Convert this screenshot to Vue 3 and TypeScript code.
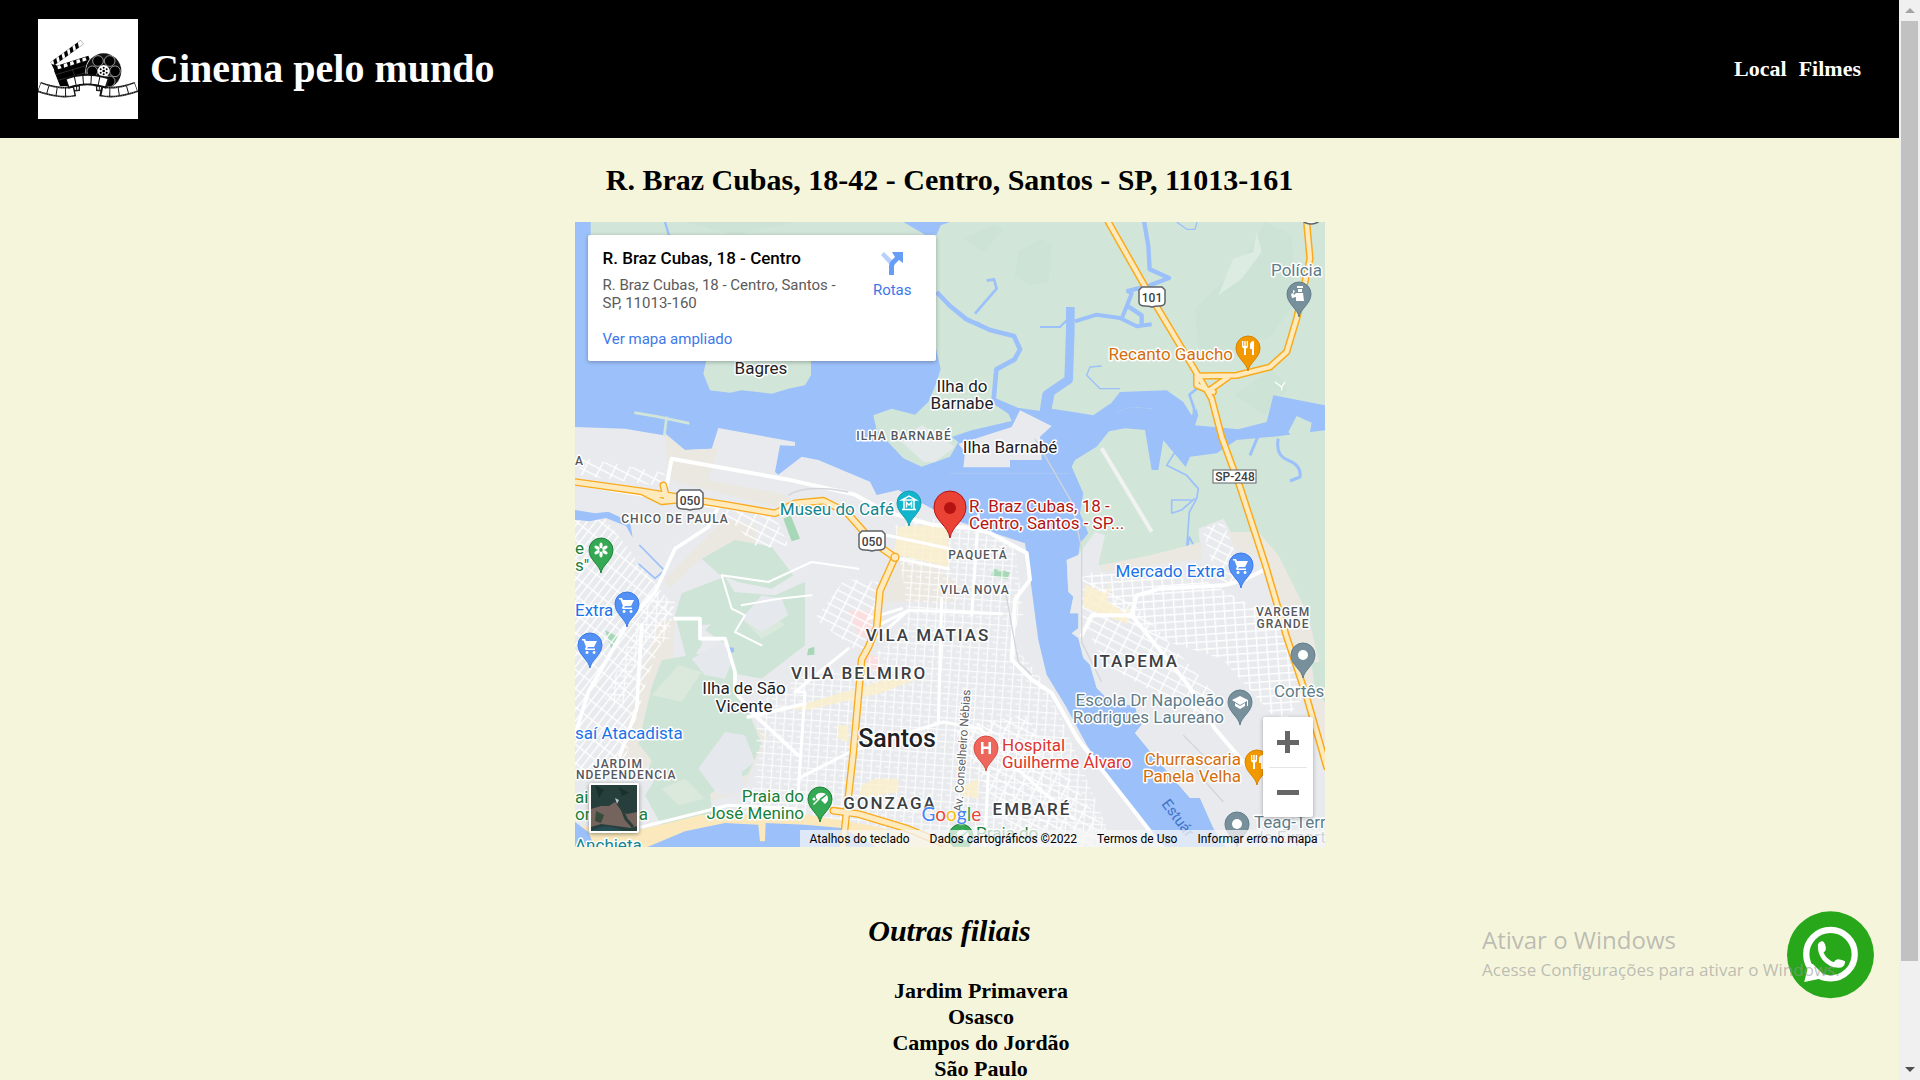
<script setup lang="ts">
type Tone = 'place' | 'food' | 'shop' | 'park' | 'school' | 'museum' | 'health' | 'target' | 'estuary'
type Anchor = 'start' | 'middle' | 'end'

interface Label {
  x: number
  y: number
  text: string
  kind: string
  anchor?: Anchor
  rotate?: number
}

interface Pin {
  x: number
  y: number
  tone: Tone
  icon: string
}

const branches: string[] = ['Jardim Primavera', 'Osasco', 'Campos do Jordão', 'São Paulo']

const labels: Label[] = [
  { x: 186, y: 152, text: 'Bagres', kind: 'place', anchor: 'middle' },
  { x: 387, y: 170, text: 'Ilha do', kind: 'place', anchor: 'middle' },
  { x: 387, y: 187, text: 'Barnabe', kind: 'place', anchor: 'middle' },
  { x: 435, y: 231, text: 'Ilha Barnabé', kind: 'place', anchor: 'middle' },
  { x: 169, y: 472, text: 'Ilha de São', kind: 'place', anchor: 'middle' },
  { x: 169, y: 490, text: 'Vicente', kind: 'place', anchor: 'middle' },
  { x: 322, y: 525, text: 'Santos', kind: 'city', anchor: 'middle' },
  { x: 329, y: 218, text: 'ILHA BARNABÉ', kind: 'area', anchor: 'middle' },
  { x: 100, y: 301, text: 'CHICO DE PAULA', kind: 'area', anchor: 'middle' },
  { x: 403, y: 337, text: 'PAQUETÁ', kind: 'area', anchor: 'middle' },
  { x: 400, y: 372, text: 'VILA NOVA', kind: 'area', anchor: 'middle' },
  { x: 708, y: 394, text: 'VARGEM', kind: 'area', anchor: 'middle' },
  { x: 708, y: 406, text: 'GRANDE', kind: 'area', anchor: 'middle' },
  { x: 43, y: 546, text: 'JARDIM', kind: 'area', anchor: 'middle' },
  { x: 1, y: 557, text: 'NDEPENDENCIA', kind: 'area' },
  { x: 0, y: 243, text: 'A', kind: 'area' },
  { x: 353, y: 419, text: 'VILA MATIAS', kind: 'district', anchor: 'middle' },
  { x: 284, y: 457, text: 'VILA BELMIRO', kind: 'district', anchor: 'middle' },
  { x: 561, y: 445, text: 'ITAPEMA', kind: 'district', anchor: 'middle' },
  { x: 315, y: 587, text: 'GONZAGA', kind: 'district', anchor: 'middle' },
  { x: 457, y: 593, text: 'EMBARÉ', kind: 'district', anchor: 'middle' },
  { x: 387, y: 590, text: 'Av. Conselheiro Nébias', kind: 'street', rotate: -86 },
  { x: 586, y: 582, text: 'Estuár', kind: 'estuary', rotate: 53 },
  { x: 658, y: 138, text: 'Recanto Gaucho', kind: 'food', anchor: 'end' },
  { x: 747, y: 54, text: 'Polícia', kind: 'school', anchor: 'end' },
  { x: 319, y: 293, text: 'Museu do Café', kind: 'museum', anchor: 'end' },
  { x: 394, y: 290, text: 'R. Braz Cubas, 18 -', kind: 'target' },
  { x: 394, y: 307, text: 'Centro, Santos - SP...', kind: 'target' },
  { x: 650, y: 355, text: 'Mercado Extra', kind: 'shop', anchor: 'end' },
  { x: 0, y: 394, text: 'Extra', kind: 'shop' },
  { x: 0, y: 517, text: 'saí Atacadista', kind: 'shop' },
  { x: 0, y: 332, text: 'e', kind: 'park' },
  { x: 0, y: 349, text: 's"', kind: 'park' },
  { x: 229, y: 580, text: 'Praia do', kind: 'park', anchor: 'end' },
  { x: 229, y: 597, text: 'José Menino', kind: 'park', anchor: 'end' },
  { x: 401, y: 617, text: 'Praia do', kind: 'park' },
  { x: 0, y: 581, text: 'ai', kind: 'park' },
  { x: 0, y: 598, text: 'on', kind: 'park' },
  { x: 73, y: 598, text: 'a', kind: 'park', anchor: 'end' },
  { x: 0, y: 629, text: 'Anchieta', kind: 'museum' },
  { x: 649, y: 484, text: 'Escola Dr Napoleão', kind: 'school', anchor: 'end' },
  { x: 649, y: 501, text: 'Rodrigues Laureano', kind: 'school', anchor: 'end' },
  { x: 699, y: 475, text: 'Cortês', kind: 'school' },
  { x: 679, y: 606, text: 'Teag-Terr', kind: 'school' },
  { x: 679, y: 621, text: 'de Export', kind: 'school' },
  { x: 427, y: 529, text: 'Hospital', kind: 'health' },
  { x: 427, y: 546, text: 'Guilherme Álvaro', kind: 'health' },
  { x: 666, y: 543, text: 'Churrascaria', kind: 'food', anchor: 'end' },
  { x: 666, y: 560, text: 'Panela Velha', kind: 'food', anchor: 'end' },
]

const pins: Pin[] = [
  { x: 724, y: 72, tone: 'school', icon: 'police' },
  { x: 673, y: 126, tone: 'food', icon: 'fork' },
  { x: 334, y: 281, tone: 'museum', icon: 'museum' },
  { x: 26, y: 328, tone: 'park', icon: 'flower' },
  { x: 52, y: 382, tone: 'shop', icon: 'cart' },
  { x: 15, y: 423, tone: 'shop', icon: 'cart' },
  { x: 666, y: 343, tone: 'shop', icon: 'cart' },
  { x: 728, y: 433, tone: 'school', icon: 'dot' },
  { x: 665, y: 480, tone: 'school', icon: 'cap' },
  { x: 411, y: 526, tone: 'health', icon: 'hospital' },
  { x: 682, y: 540, tone: 'food', icon: 'fork' },
  { x: 245, y: 577, tone: 'park', icon: 'beach' },
  { x: 662, y: 602, tone: 'school', icon: 'dot' },
  { x: 386, y: 614, tone: 'park', icon: 'beach' },
]

const shields = [
  { x: 577, y: 75, text: '101' },
  { x: 115, y: 278, text: '050' },
  { x: 297, y: 319, text: '050' },
]
</script>

<template>
  <div class="window">
    <div class="page">
      <header class="top">
        <div class="brand">
          <svg class="logo" viewBox="24 27 300 300" role="img" aria-label="Claquete e rolo de filme">
            <rect x="24" y="27" width="300" height="300" fill="#fff" />
            <g transform="rotate(-36 68 162)">
              <rect x="66" y="154" width="112" height="14" fill="#fff" stroke="#444" stroke-width="1" />
              <path d="M70 168l6-14h11l-6 14zM90 168l6-14h11l-6 14zM110 168l6-14h11l-6 14zM130 168l6-14h11l-6 14zM150 168l6-14h11l-6 14z" fill="#000" />
            </g>
            <path d="M64 162l16 4-4 20zM72 182l104-32 16 52-60 26H90z" fill="#000" />
            <path d="M74 184l-3-14 104-33 6 15z" fill="#000" />
            <path d="M84 178l-2-10 8-3 5 10zM102 173l-1-11 9-3 4 10zM121 167l-1-11 9-3 4 10zM140 161l-1-11 9-3 4 10zM158 155l-1-10 9-3 4 9z" fill="#fff" />
            <path d="M77 194l102-30M127 178l7 19M84 211l90-25" stroke="#888" stroke-width="1" fill="none" />
            <circle cx="221" cy="183" r="55" fill="#fff" />
            <circle cx="221" cy="183" r="53" fill="#111" />
            <g fill="#000" stroke="#ddd" stroke-width="2">
              <circle cx="204" cy="153" r="16" /><circle cx="239" cy="153" r="16" />
              <circle cx="187" cy="184" r="16" /><circle cx="255" cy="184" r="16" />
              <circle cx="204" cy="214" r="16" /><circle cx="239" cy="214" r="16" />
            </g>
            <circle cx="221" cy="183" r="18" fill="#fff" />
            <g fill="#000">
              <circle cx="221" cy="183" r="4" /><circle cx="221" cy="173" r="3" /><circle cx="221" cy="193" r="3" />
              <circle cx="212" cy="178" r="3" /><circle cx="230" cy="178" r="3" /><circle cx="212" cy="188" r="3" /><circle cx="230" cy="188" r="3" />
            </g>
            <g fill="none">
              <path d="M116 240q14-6 34-6M232 240q-14-6-34-6" stroke="#222" stroke-width="18" />
              <path d="M118 240q14-6 28-5M230 240q-14-6-28-5" stroke="#fff" stroke-width="9" stroke-dasharray="9 3" />
              <path d="M27 231q60 22 108 12M319 231q-60 22-108 12" stroke="#111" stroke-width="32" />
              <path d="M29 231q60 22 102 13M317 231q-60 22-100 13" stroke="#fff" stroke-width="22" stroke-dasharray="24 3" />
              <path d="M27 218q60 22 104 13M319 218q-60 22-104 13M27 245q60 22 104 13M319 245q-60 22-104 13" stroke="#bbb" stroke-width="2" stroke-dasharray="3 4" />
              <path d="M110 220q62-22 124 0" stroke="#111" stroke-width="34" />
              <path d="M114 219q58-20 118 0" stroke="#fff" stroke-width="23" stroke-dasharray="21 3" />
            </g>
          </svg>
          <h1>Cinema pelo mundo</h1>
        </div>
        <nav class="links">
          <a href="#local">Local</a>
          <a href="#filmes">Filmes</a>
        </nav>
      </header>

      <main class="content">
        <h2 id="local">R. Braz Cubas, 18-42 - Centro, Santos - SP, 11013-161</h2>

        <section class="map" aria-label="Mapa">
          <svg class="canvas" viewBox="0 0 750 625">
            <defs>
              <pattern id="grid-south" width="27" height="36" patternUnits="userSpaceOnUse" patternTransform="rotate(4)">
                <path d="M0 2h27M2 0v36M14 18h13" stroke="#fff" stroke-width="3" />
              </pattern>
              <pattern id="grid-west" width="20" height="44" patternUnits="userSpaceOnUse" patternTransform="rotate(38)">
                <path d="M0 2h20M2 0v44" stroke="#fff" stroke-width="4" />
              </pattern>
              <pattern id="grid-east" width="30" height="22" patternUnits="userSpaceOnUse" patternTransform="rotate(-4)">
                <path d="M0 2h30M2 0v22" stroke="#fff" stroke-width="4" />
              </pattern>
              <pattern id="grid-tilt" width="40" height="24" patternUnits="userSpaceOnUse" patternTransform="rotate(27)">
                <path d="M0 2h40M2 0v24" stroke="#fff" stroke-width="4" />
              </pattern>
            </defs>

            <!-- Terrain, drawn on a grid three times finer than the labels -->
            <g transform="scale(0.33333)">
              <rect width="2250" height="1875" fill="#d1e6d9" />
              <g fill="#c9dfd1">
                <path d="M330 0l150 40 180-40z M1330 90l70-40 30 20-10 110-60 10-40-30z M1165 50l90-40 30 10-60 70z" opacity=".5" />
                <path d="M1860 260l150-150 60-110 80 40 10 200-70 100-150 60-70-20z M1980 520l110-80 50 60-70 80z" opacity=".4" />
              </g>
              <path d="M1975 110l60-20 10-60 15 60-60 80-70 50z" fill="#dcece2" />

              <!-- Open water -->
              <g fill="#9cc0fa">
                <path d="M0 0H47V380H1083L1097 440 1085 480 1060 540 1020 578 950 560 895 580 905 624 985 709 1040 734 1125 704 1150 660 1130 645 1190 625 1310 597 1300 575 1255 545 1260 535 1325 568 1385 580 1410 550 1400 520 1440 510 1430 560 1495 570 1555 580 1605 545 1640 600 1605 624 1565 674 1500 714 1490 734 1525 814 1515 874 1540 934 1515 964 1510 999 1475 1014 1480 1109 1495 1124 1485 1174 1510 1174 1510 1219 1490 1234 1510 1248 1525 1308 1545 1328 1565 1398 1605 1438 1680 1453 1685 1473 1700 1508 1680 1533 1725 1588 1845 1728 1875 1728 1915 1818 1955 1878H0z" />
                <path d="M985 0l65 38h35l12-28 28-10z" />
                <path d="M1595 560L1635 510 1775 505 1825 540 1850 580 1865 560 1870 580 1860 610 1990 622 2075 600 2095 520 2250 550V625L2095 644 1985 654 1925 694 1845 704 1832 735 1765 655 1750 744H1730L1710 624 1735 560 1670 555 1625 570 1600 630z" />
              </g>
              <path d="M1590 630l35-60 45-15 65 5 20 64-45 0-60-5z" fill="#9cc0fa" />
              <g fill="none" stroke="#9cc0fa" stroke-linejoin="round">
                <path d="M1085 210l40 42 50 40 70 32 72 18 18 40-16 30-55 30-8 92 70 30 70 10" stroke-width="14" />
                <path d="M1165 290l50 15M1200 275l65-75-8-28-22 4" stroke-width="8" />
                <path d="M1395 315l60 0 30-30" stroke-width="6" />
                <path d="M1486 255v70l-5 148-66 45-10 62" stroke-width="26" />
                <path d="M1500 298l65-20 70 10 50 25 45-6M1640 290l30-75-15-10" stroke-width="12" />
                <path d="M1655 208l70-18 57-22-58-26-4-70-13-75M1655 250l45 30 0 30" stroke-width="13" />
                <path d="M1805 0l30 22h25l6-22M1580 432l-35 3-10 25 40 40 60 0" stroke-width="4" />
                <path d="M1865 500l-22 18 14 40 0 30-30 10" stroke-width="8" />
                <path d="M1800 690l-25 40 60 30 35 40-5 30-22 40-8 110 30 30M1850 834l-60 0 0 40 30-10 40-35M1833 1005l10-60 30 60" stroke-width="5" />
                <path d="M2050 640l-25 60M2110 650q-10 50 30 65t35 50l-30 12" stroke-width="9" />
                <path d="M270 0l12 40" stroke-width="7" />
              </g>
              <path d="M2140 630l25-48 45 20-8 45-40 10z" fill="#d1e6d9" />
              <path d="M395 410l-10 45 20 50 60 7 35-7 90 10 50-15 50-10 18-30v-50z" fill="#d1e6d9" />
              <path d="M178 572l70 12 95 20M275 584l-10 80" fill="none" stroke="#d1e6d9" stroke-width="8" />
              <path d="M970 650l70-40 40 20 60 45-60 45-35 0z" fill="#e8eaed" opacity=".8" />
              <path d="M1335 565L1430 612 1395 644 1400 714H1305V736H1165L1170 690 1150 665 1200 650 1310 615z" fill="#e8eaed" />

              <!-- Built-up land -->
              <path d="M0 615L150 620 265 640 330 684 410 680 430 618 660 660V672L615 670 600 750 610 758 680 704 730 714 885 779 905 819 970 804 1125 890 1185 909 1350 964 1365 1064 1390 1254 1415 1358 1470 1448 1535 1568 1615 1688 1765 1878H0z" fill="#e8eaed" />
              <path d="M270 634l60 50 80-4 20-5-30 100 220 40 60 40-10 15L300 780l-20-20z M270 1070l180-180 90 20 0 60-150 30-110 100z M940 1010l130 20 90 60-20 50-230 0z M160 1500l90-300 50-10-20 400-100 70-60-20z M540 1510l40 30-80 170-130 40 30-80z" fill="#ebe8e1" />
              <path d="M1475 1014L1510 999 1560 930 1590 940 1570 1030 1880 1010 1870 920 1945 890 1985 960 2050 970 2130 1150 2170 1260 2250 1560V1878H1955L1915 1818 1875 1728H1845L1725 1588 1680 1533 1700 1508 1680 1453 1605 1438 1565 1398 1545 1328 1525 1308 1510 1248 1490 1234 1510 1219V1174H1485L1495 1124 1480 1109z" fill="#e8eaed" />
              <path d="M1575 1030l150-30 155-40 0 50-300 40z M1960 930l90 0 60 70 90 180 50 220 0 160-60-120-130-430-80-30z" fill="#ebe8e1" />
              <path d="M2210 1320l40 0 0 120-30-30z" fill="#cee4d7" />

              <g fill="#cee4d7">
                <path d="M380 1010l100-56 110 20 65 86-65 40-100-20-60-25z M300 1180l20-66 130-50 50 80-30 56-90 10 0 60-40 60z" />
                <path d="M480 1110l120 10 90-40v190l-130 100-80-15 0 40 35 60 45 110-40 90-115 60 10 80-145 35-60-110 35-55-25-20 10-30-40-50 40-170 30-80 110-20 90 40-10-70-60-40 60-60z" />
              </g>
              <path d="M230 1420l80-90 70 20-60 90z M260 1700l70-30 60 60-80 20z M510 1200l60-40 60 50-70 40z" fill="#dae9dc" />
              <path d="M350 1310l90-50 30 60-20 50-60-10z M450 1530l60 10 30 80-40 30 10 60-80 10-60-80z M560 1120l60 10 20 50-80 50-60-40z" fill="#e5e8ec" />
              <path d="M625 890l22-10 28 70-25 8zM1255 1040l50 10-8 22-48-10zM90 1224l50 26-30 34zM700 1280l18-6 0 24-22 2z" fill="#a6d8b8" />
              <path d="M820 1165l70 5-5 80-35-10z M870 1295l45 10-10 35-40-5z" fill="#fbdfe0" />

              <!-- Street grids -->
              <path d="M0 880l90 10 210 270-80 200-80 290-140 0z" fill="url(#grid-west)" />
              <path d="M230 1100l70 40-20 120-80 0-60 200-50-30z" fill="url(#grid-south)" />
              <path d="M20 708l250 45-10 40-250-35z M430 860l170 20 40 90-90 10z M720 1190l90-120 100 10-10 180-50 30z" fill="url(#grid-tilt)" />
              <path d="M960 910L1080 890 1320 970 1345 1180 1300 1250 1400 1370 1460 1490 1620 1875H660L500 1765 540 1685 550 1445 670 1365 860 1325 940 1265 1000 1185z" fill="url(#grid-south)" />
              <path d="M1350 1480l280 395h-290l-210-360z" fill="url(#grid-tilt)" />
              <path d="M1520 1050l360 20 240 130 60 230-60 80-180-200-160-50-180-100z" fill="url(#grid-east)" />
              <path d="M1880 920l65-20 30 80 60 90-100 30z M1520 1060l160 90 120 130 150 170-30 60-330-180-70-140z" fill="url(#grid-tilt)" />
              <g fill="#fbefcb" opacity=".8">
                <path d="M970 915l150-10v130l-165-40z M1530 1085l60 30 20-40-15 60 55 40 15-30-10 60-130-50z M640 1460l200-60 170-50 20 20-120 45-220 50z M790 1510l30 0 0 50-30-10z M860 1690l40-20 70 0 0 40-120 20z M1170 1690l40-20 0 60-50-10z" />
              </g>
              <path d="M0 1810l160 20 80-17 140-35 320 0 200 35 220 62H0z" fill="#fbe9bd" />
              <path d="M210 1878l120-50 120-25 100 5 5 50h15l2-55 118 5 110 10 120 65z M0 1800l40 30 20 48H0z" fill="#9cc0fa" />
              <path d="M0 864l60 10 40-5 65 30 8 48-20-35-60-24-50 10-43-5zM455 1275l22 2 0 12-20 8z" fill="#9cc0fa" />
              <path d="M190 1025l50 44 28-24-75-76" fill="none" stroke="#9cc0fa" stroke-width="5" />

              <!-- White roads -->
              <g fill="none" stroke="#fff" stroke-linejoin="round" stroke-linecap="round">
                <path d="M275 790l15-80 350 63 200 45 90 50 140 40 115 10 60 15 110 60 10 80-45 60-10 180 60 60 60 40 80 140 180 230 140 180" stroke-width="12" />
                <path d="M0 785l300 50 130 20-30 60-100 65-60 130-80 90-120 210-40 130M200 1210l-15 250-50 140M300 1190h75l0 60 75 0 30 100 0 60 60 70 130 120M520 1485l170-40" stroke-width="11" />
                <path d="M670 1670l155-80 180-60 100-30 110 20 60 60 40 50 180 160M1100 1130l-10 370M820 1280l-160 130 30 0-20 300M980 1160l-100 30M970 1010l150 30M935 940l190 40" stroke-width="9" />
                <path d="M920 1205l80-40 280 10M1000 1165l-90 80" stroke-width="9" />
                <path d="M200 1815l180-45 80-20 200 10M1230 1875l10-230M1190 1180l20-300" stroke-width="9" />
                <path d="M1670 1180l15-60 70-20 190-10 60-15 60-30M1670 1180l170 210 80 130 110 130M1520 1240l30-60 120 0" stroke-width="12" />
                <path d="M440 1060l30 100 40 20-30 50 80 40M440 1060l140 20 130-60 140 20M500 1150l110-20 100-10" stroke-width="6" />
              </g>
              <path d="M1580 679l150 250" stroke="#f0f3f2" stroke-width="12" fill="none" />
              <path d="M1380 650l110 190 30 140 0 280 60 120M640 820q50-35 180-10M1290 1100l40 220 40 40M1825 1540l60 60-20 50 80 90" fill="none" stroke="#d3d5d8" stroke-width="4" />
              <path d="M1125 754h360" stroke="#b0cbf5" stroke-width="2" />
              <path d="M2100 480l20 15 10-15M2120 495l0 10" stroke="#fff" stroke-width="4" fill="none" />

              <!-- Highways -->
              <g fill="none" stroke-linejoin="round" stroke-linecap="round">
                <g stroke="#f9ab1d">
                  <path d="M0 780l200 28 260 42 140 24 60-30 85-8 70 35 80 90 65 45-45 100-10 110-25 60-20 36-25 280-35 310M775 1766l75 10 150 45 130 54M200 808l60 30 50-5M265 790l10 40" stroke-width="23" />
                  <path d="M1600 0l125 220 150 250 35 60 30 115 55 150 75 230 65 220 60 180 60 210M1875 462l110-2 100-25 50-45 30-100 25-110 15-70-10-110M1865 460l0 30 50 20M1910 500l50-35" stroke-width="22" />
                </g>
                <g stroke="#feeabd">
                  <path d="M0 780l200 28 260 42 140 24 60-30 85-8 70 35 80 90 65 45-45 100-10 110-25 60-20 36-25 280-35 310M775 1766l75 10 150 45 130 54M200 808l60 30 50-5M265 790l10 40" stroke-width="15" />
                  <path d="M1600 0l125 220 150 250 35 60 30 115 55 150 75 230 65 220 60 180 60 210M1875 462l110-2 100-25 50-45 30-100 25-110 15-70-10-110M1865 460l0 30 50 20M1910 500l50-35" stroke-width="13" />
                </g>
                <circle cx="960" cy="1006" r="12" stroke="#f9ab1d" stroke-width="4" fill="#feeabd" />
              </g>
            </g>

            <g v-for="(s, i) in shields" :key="'s' + i" :transform="`translate(${s.x} ${s.y})`">
              <path d="M-10-10h20l3 3v12q0 4-6 4-4 0-7 1-3-1-7-1-6 0-6-4V-7z" fill="#fff" stroke="#5f6368" stroke-width="1.5" />
              <text class="shield" y="5" text-anchor="middle">{{ s.text }}</text>
            </g>
            <rect x="638" y="248" width="43" height="13" fill="#fff" stroke="#5f6368" />
            <text class="shield" x="660" y="259" text-anchor="middle">SP-248</text>
            <path d="M727-8h18q3 6-4 9-5 2-10 0-6-3-4-9" fill="#fff" stroke="#5f6368" stroke-width="1.5" />

            <text
              v-for="(l, i) in labels"
              :key="'l' + i"
              :class="['label', l.kind]"
              :text-anchor="l.anchor ?? 'start'"
              :transform="`translate(${l.x} ${l.y}) rotate(${l.rotate ?? 0})`"
            >{{ l.text }}</text>

            <g v-for="(p, i) in pins" :key="'p' + i" :class="['pin', p.tone]" :transform="`translate(${p.x} ${p.y})`">
              <path class="drop" d="M0 23C-1 15-12 10-12 0A12 12 0 0 1 12 0C12 10 1 15 0 23z" />
              <circle v-if="p.icon === 'dot'" r="5" fill="#fff" />
              <path v-else-if="p.icon === 'fork'" d="M-6-7v5q0 2 2 2.500V7h2V.5Q0 0 0-2v-5h-1.300v5h-1v-5h-1.400v5h-1v-5zM2-4q1-3 4-3V7H4V1H2z" fill="#fff" />
              <path v-else-if="p.icon === 'cart'" d="M-8-6h3l1 2H7L4 2h-6l-1 1.500h8V5h-9q-2-1 0-3l-2.500-6.500H-8zM-3 6a1.500 1.500 0 1 0 .1 0M4 6a1.500 1.500 0 1 0 .1 0" fill="#fff" />
              <path v-else-if="p.icon === 'cap'" d="M0-6l8 4v6H7v-5L0 3l-8-5zM-5 1l5 3 5-3v3L0 7l-5-3z" fill="#fff" />
              <path v-else-if="p.icon === 'hospital'" d="M-5-6h2.500v4.500h5V-6H5V6H2.500V1h-5v5H-5z" fill="#fff" />
              <g v-else-if="p.icon === 'museum'" fill="none" stroke="#fff" stroke-width="1.500">
                <path d="M-7-3l7-4 7 4zM-5-3v9M5-3v9M-7 6.500H7M-2.500 4.500v-5L0 2l2.500-2.500v5" />
              </g>
              <g v-else-if="p.icon === 'flower'" fill="#fff">
                <ellipse v-for="a in 6" :key="a" cy="-4.500" rx="1.600" ry="3" :transform="`rotate(${a * 60})`" />
              </g>
              <g v-else-if="p.icon === 'beach'" fill="#fff">
                <circle cx="-6" cy="0" r="1.500" />
                <path d="M-4-4Q0-8 6-5L-2 1Q-5-1-4-4zM7-4q3 5-2 9L1 1zM0 0l-6 6-1-1 6-6z" />
              </g>
              <path v-else d="M-2-8h6v2h-6zM-1-5h4v3h-4zM-3-1h7l1 8h-8V3l-4 1-1-4 2-1 1 2zM-6-4l2 1-2 3z" fill="#fff" />
            </g>

            <g transform="translate(375 287)">
              <path d="M0 29C-2 16-16 12-16-2A16 16 0 0 1 16-2C16 12 2 16 0 29z" fill="#ea4335" stroke="#b31412" />
              <circle cy="-1" r="6" fill="#b31412" />
            </g>
          </svg>

          <article class="card">
            <div class="details">
              <h3>R. Braz Cubas, 18 - Centro</h3>
              <p>R. Braz Cubas, 18 - Centro, Santos - SP, 11013-160</p>
              <a href="#mapa">Ver mapa ampliado</a>
            </div>
            <a class="routes" href="#rotas">
              <svg width="24" height="24" viewBox="0 0 24 24" aria-hidden="true">
                <path d="M1 4l3-3 9 9-3 4z" fill="#b9d0fc" />
                <path d="M9 24V15q0-3 2-5l4-4-3-5h11v11l-4-3-4 4q-1 1-1 3v8z" fill="#669df6" />
              </svg>
              Rotas
            </a>
          </article>

          <button class="satellite" type="button" aria-label="Mostrar imagens de satélite">
            <svg viewBox="0 0 46 46" aria-hidden="true">
              <rect width="46" height="46" fill="#273f3c" />
              <path d="M0 24l10-3 8 0 6-4 6 8 6 4 10-2v14l-6 2-30-4-10 3z" fill="#75645d" />
              <path d="M26 16l5 8 4 10 7 8" stroke="#2b3f3a" stroke-width="3" fill="none" />
              <path d="M24 13l4 2-2 4z" fill="#b4c3c1" />
              <path d="M4 0l9 5-5 8zM28 2l10 6-7 3z" fill="#1a302c" />
              <path d="M5 26l8 4-3 8-6-2z" fill="#374b3c" />
              <path d="M0 46q15-9 32 0z" fill="#274d54" />
            </svg>
          </button>

          <div class="zoom">
            <button type="button" aria-label="Aumentar o zoom"><span class="bar"></span><span class="bar upright"></span></button>
            <button type="button" aria-label="Diminuir o zoom"><span class="bar"></span></button>
          </div>

          <div class="google"><span class="b">G</span><span class="r">o</span><span class="y">o</span><span class="b">g</span><span class="g">l</span><span class="r">e</span></div>

          <div class="credits">
            <button type="button">Atalhos do teclado</button>
            <span>Dados cartográficos ©2022</span>
            <a href="#termos">Termos de Uso</a>
            <a href="#erro">Informar erro no mapa</a>
          </div>
        </section>

        <h2 class="others">Outras filiais</h2>
        <ul class="branches">
          <li v-for="b in branches" :key="b">{{ b }}</li>
        </ul>
      </main>

      <a class="whatsapp" href="#whatsapp" aria-label="WhatsApp">
        <svg viewBox="980 63 262 264" aria-hidden="true">
          <circle cx="1111" cy="195" r="131" fill="#29a71a" />
          <circle cx="1111" cy="193" r="73" fill="none" stroke="#fff" stroke-width="19" />
          <path d="M1032 277l13-52 13-2 30 30 2 12z" fill="#fff" />
          <path d="M1073 165q4-12 15-11 9 8 9 24 0 6-7 10 9 21 31 29 5-9 13-9 12 1 21 6 0 20-20 20-28-1-47-23-17-20-15-46z" fill="#fff" />
        </svg>
      </a>
      <aside class="watermark">
        <strong>Ativar o Windows</strong>
        <span>Acesse Configurações para ativar o Windows.</span>
      </aside>
    </div>

    <div class="scrollbar" aria-hidden="true">
      <span class="arrow up"></span>
      <span class="track"><span class="thumb"></span></span>
      <span class="arrow down"></span>
    </div>
  </div>
</template>

<style>
body {
  margin: 0;
  overflow: hidden;
}
</style>

<style scoped>
.window {
  display: grid;
  grid-template-columns: minmax(0, 1fr) 21px;
  height: 100vh;
  overflow: hidden;
  font-family: "Liberation Serif", "Times New Roman", serif;
  color: #000;
}
.page {
  position: relative;
  min-height: 0;
  overflow: hidden;
  background: #f5f5dc;
}
.top {
  display: flex;
  align-items: center;
  justify-content: space-between;
  padding: 19px 38px;
  background: #000;
  color: #fff;
}
.brand {
  display: flex;
  align-items: center;
  gap: 12px;
}
.logo {
  width: 100px;
  height: 100px;
}
h1 {
  margin: 0;
  font-size: 40px;
  line-height: 48px;
}
.links {
  display: flex;
  gap: 12px;
  font-size: 22px;
  line-height: 26px;
  font-weight: bold;
}
.links a {
  color: inherit;
  text-decoration: none;
}
.content {
  display: flex;
  flex-direction: column;
  align-items: center;
}
h2 {
  margin: 25px 0;
  font-size: 30px;
  line-height: 34px;
}
.map {
  position: relative;
  width: 750px;
  max-width: 100%;
  overflow: hidden;
  font-family: Roboto, Arial, sans-serif;
}
.canvas {
  display: block;
  width: 100%;
}
.label {
  font-size: 17px;
  stroke: #fff;
  stroke-width: 3px;
  stroke-linejoin: round;
  paint-order: stroke;
}
.label.place { fill: #202124; }
.label.city { fill: #202124; font-size: 25px; font-weight: 500; }
.label.area { fill: #55585d; font-size: 12px; font-weight: 500; letter-spacing: 1px; }
.label.district { fill: #3c4043; font-size: 17px; font-weight: 500; letter-spacing: 2px; }
.label.street { fill: #5f6368; font-size: 12px; }
.label.estuary { fill: #3e74c8; font-size: 15px; stroke: none; }
.label.food { fill: #d56e0c; }
.label.shop { fill: #1a73e8; }
.label.school { fill: #607d8b; }
.label.museum { fill: #12858e; }
.label.park { fill: #188038; }
.label.health { fill: #dc362e; }
.label.target { fill: #b31412; }
.shield {
  font-size: 12px;
  font-weight: 500;
  fill: #3c4043;
}
.drop { stroke-width: 1px; }
.food .drop { fill: #f29900; stroke: #d88100; }
.shop .drop { fill: #5491f5; stroke: #3b78e7; }
.school .drop { fill: #78909c; stroke: #607d8b; }
.museum .drop { fill: #12b5cb; stroke: #129eaf; }
.park .drop { fill: #34a853; stroke: #188038; }
.health .drop { fill: #ee675c; stroke: #d84a40; }

.card {
  position: absolute;
  top: 13px;
  left: 13px;
  display: flex;
  justify-content: space-between;
  box-sizing: border-box;
  width: 348px;
  padding: 13px 20px 13px 15px;
  background: #fff;
  border-radius: 2px;
  box-shadow: 0 1px 4px rgba(0, 0, 0, 0.3);
  font-size: 15px;
  line-height: 18px;
}
.details {
  width: 244px;
}
.card h3 {
  margin: 0 0 7px;
  font-size: 17px;
  line-height: 21px;
  font-weight: 500;
}
.card p {
  margin: 0 0 18px;
  color: #5b5b5b;
}
.card a {
  color: #3d78ea;
  text-decoration: none;
}
.routes {
  display: flex;
  flex-direction: column;
  align-items: center;
  gap: 6px;
  padding: 3px 4px 0 0;
}
.satellite {
  position: absolute;
  left: 14px;
  bottom: 14px;
  width: 50px;
  height: 50px;
  padding: 0;
  border: 2px solid #fff;
  border-radius: 2px;
  background: #fff;
  box-shadow: 0 1px 4px rgba(0, 0, 0, 0.4);
}
.satellite svg {
  display: block;
}
.zoom {
  position: absolute;
  right: 12px;
  bottom: 30px;
  display: flex;
  flex-direction: column;
  width: 50px;
  background: #fff;
  border-radius: 2px;
  box-shadow: 0 1px 4px rgba(0, 0, 0, 0.3);
}
.zoom button {
  display: grid;
  place-items: center;
  height: 50px;
  padding: 0;
  border: 0;
  background: none;
}
.zoom button + button {
  margin: 0 6px;
  border-top: 1px solid #e6e6e6;
}
.bar {
  grid-area: 1 / 1;
  width: 22px;
  height: 5px;
  background: #666;
}
.upright {
  width: 5px;
  height: 22px;
}
.google {
  position: absolute;
  left: 347px;
  bottom: 21px;
  font-family: Lato, sans-serif;
  font-size: 19px;
  line-height: 24px;
  text-shadow: 0 0 2px #fff, 0 0 2px #fff, 0 0 2px #fff;
}
.b { color: #4285f4; }
.r { color: #ea4335; }
.y { color: #fbbc05; }
.g { color: #34a853; }
.credits {
  position: absolute;
  right: 0;
  bottom: 0;
  display: flex;
  font-size: 12px;
  line-height: 15px;
}
.credits > * {
  padding: 2px 10px 0;
  border: 0;
  background: rgba(245, 245, 245, 0.75);
  font: inherit;
  color: #000;
  text-decoration: none;
}
.credits > :last-child {
  padding-right: 7px;
}
.others {
  margin: 67px 0 30px;
  font-style: italic;
}
.branches {
  margin: 0;
  padding: 0 0 0 63px;
  list-style: none;
  font-size: 22px;
  line-height: 26px;
  font-weight: bold;
  text-align: center;
}
.whatsapp {
  position: absolute;
  right: 25px;
  bottom: 81px;
  width: 87px;
  height: 88px;
}
.whatsapp svg {
  display: block;
}
.watermark {
  position: absolute;
  right: 57px;
  bottom: 98px;
  display: flex;
  flex-direction: column;
  width: 360px;
  font-family: "Open Sans", "Segoe UI", sans-serif;
  font-size: 17px;
  line-height: 24px;
  color: rgba(150, 150, 150, 0.6);
  white-space: nowrap;
}
.watermark strong {
  font-size: 24px;
  line-height: 36px;
  font-weight: normal;
}
.scrollbar {
  display: flex;
  flex-direction: column;
  background: #f0f0f0;
}
.track {
  flex: 1;
  padding: 0 2px;
}
.thumb {
  display: block;
  height: calc(100% - 98px);
  background: #c1c1c1;
}
.arrow {
  display: grid;
  place-items: center;
  height: 21px;
}
.arrow::before {
  content: "";
  border: 5px solid transparent;
}
.up::before {
  border-top: 0;
  border-bottom-color: #a3a3a3;
}
.down::before {
  border-bottom: 0;
  border-top-color: #505050;
}
</style>
